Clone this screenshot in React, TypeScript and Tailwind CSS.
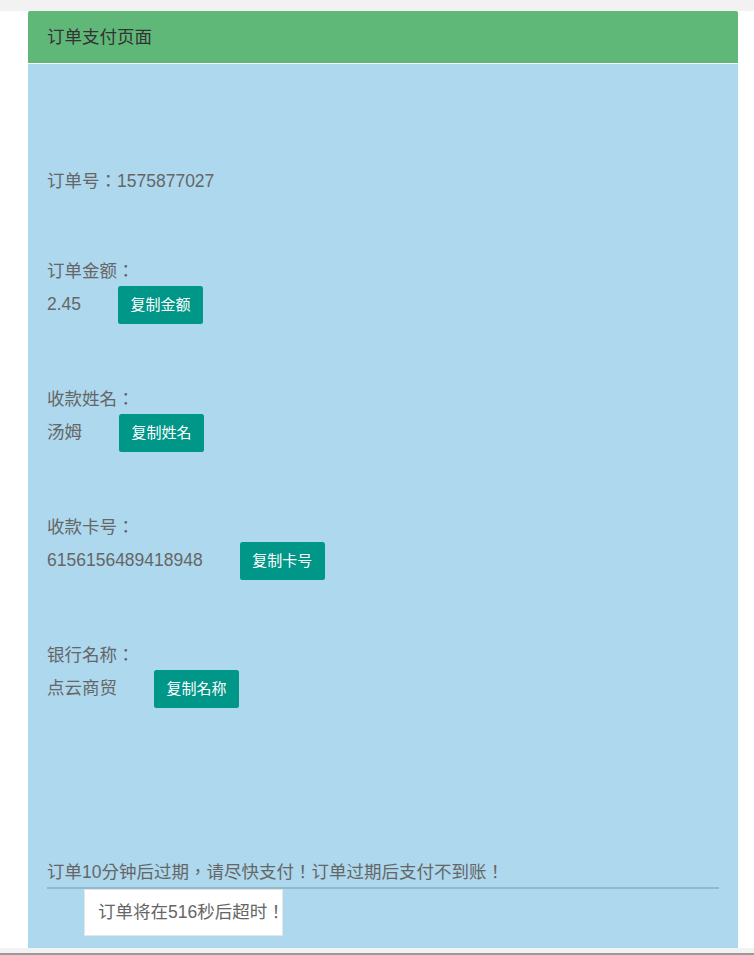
import React from "react";

const font = { fontFamily: '"Liberation Sans", "Noto Sans CJK TC", sans-serif' };

function CopyBtn({ label }: { label: string }) {
  return (
    <button className="ml-[37px] h-[38px] px-[12.5px] rounded-[2.5px] bg-[#009688] text-white text-[15px] leading-[38px] whitespace-nowrap">
      {label}
    </button>
  );
}

function Section({ label, value, btn }: { label: string; value: string; btn: string }) {
  return (
    <div className="mt-[60px] flex flex-col">
      <div className="h-[30px] leading-[30px]">{label}</div>
      <div className="h-[38px] flex items-center">
        <span className="leading-[30px] -mt-[2px]">{value}</span>
        <CopyBtn label={btn} />
      </div>
    </div>
  );
}

export default function App() {
  return (
    <div className="w-[754px] h-[955px] bg-white flex flex-col overflow-hidden" style={font}>
      <div className="h-[11px] bg-[#f2f2f2] shrink-0" />
      <div className="flex-1 flex flex-col pl-[28px] pr-[16px]">
        <div className="flex-1 flex flex-col rounded-t-[2px] overflow-hidden">
          <div className="h-[53px] shrink-0 bg-[#5fb878] border-b border-white px-[19px] flex items-center text-[17.5px] text-[#333]">
            订单支付页面
          </div>
          <div className="flex-1 bg-[#add8ee] px-[19px] pt-[102px] text-[17.5px] text-[#666]">
            <div className="h-[30px] leading-[30px]">订单号：1575877027</div>
            <Section label="订单金额：" value="2.45" btn="复制金额" />
            <Section label="收款姓名：" value="汤姆" btn="复制姓名" />
            <Section label="收款卡号：" value="6156156489418948" btn="复制卡号" />
            <Section label="银行名称：" value="点云商贸" btn="复制名称" />
            <div className="mt-[149px] h-[30px] leading-[30px] border-b-2 border-[#93b8cc] box-content">
              订单10分钟后过期，请尽快支付！订单过期后支付不到账！
            </div>
            <div className="ml-[37px] mt-0 w-[199px] h-[47px] bg-white border border-[#e6e6e6] flex items-center pl-[13px] whitespace-nowrap">
              订单将在516秒后超时！
            </div>
          </div>
        </div>
      </div>
      <div className="h-[5px] bg-[#f2f2f2] shrink-0" />
      <div className="h-[2px] bg-[#9a9a9a] shrink-0" />
    </div>
  );
}
